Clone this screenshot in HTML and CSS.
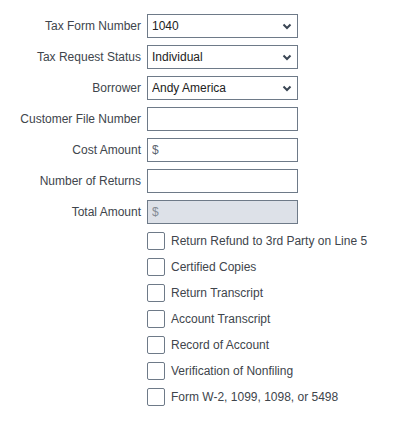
FILE: index.html
```html
<!DOCTYPE html>
<html lang="en">
<head>
  <meta charset="UTF-8" />
  <title>Tax Request</title>
  <link rel="stylesheet" href="styles.css">
</head>
<body>
  <form class="tax-form">
    <div class="fields">
      <label class="lbl" for="formNumber">Tax Form Number</label>
      <div class="select-wrap">
        <select id="formNumber"><option>1040</option></select>
        <svg class="chev" width="10" height="7" viewBox="0 0 10 7"><path d="M1.5 1.5 L5 5 L8.5 1.5" fill="none" stroke="#3a4654" stroke-width="2"/></svg>
      </div>

      <label class="lbl" for="status">Tax Request Status</label>
      <div class="select-wrap">
        <select id="status"><option>Individual</option></select>
        <svg class="chev" width="10" height="7" viewBox="0 0 10 7"><path d="M1.5 1.5 L5 5 L8.5 1.5" fill="none" stroke="#3a4654" stroke-width="2"/></svg>
      </div>

      <label class="lbl" for="borrower">Borrower</label>
      <div class="select-wrap">
        <select id="borrower"><option>Andy America</option></select>
        <svg class="chev" width="10" height="7" viewBox="0 0 10 7"><path d="M1.5 1.5 L5 5 L8.5 1.5" fill="none" stroke="#3a4654" stroke-width="2"/></svg>
      </div>

      <label class="lbl" for="fileNo">Customer File Number</label>
      <input class="txt" id="fileNo" type="text">

      <label class="lbl" for="cost">Cost Amount</label>
      <input class="txt" id="cost" type="text" placeholder="$">

      <label class="lbl" for="returns">Number of Returns</label>
      <input class="txt" id="returns" type="text">

      <label class="lbl" for="total">Total Amount</label>
      <input class="txt" id="total" type="text" placeholder="$" disabled>
    </div>

    <div class="checks">
      <label class="chk"><input type="checkbox"><span class="box"></span>Return Refund to 3rd Party on Line 5</label>
      <label class="chk"><input type="checkbox"><span class="box"></span>Certified Copies</label>
      <label class="chk"><input type="checkbox"><span class="box"></span>Return Transcript</label>
      <label class="chk"><input type="checkbox"><span class="box"></span>Account Transcript</label>
      <label class="chk"><input type="checkbox"><span class="box"></span>Record of Account</label>
      <label class="chk"><input type="checkbox"><span class="box"></span>Verification of Nonfiling</label>
      <label class="chk"><input type="checkbox"><span class="box"></span>Form W-2, 1099, 1098, or 5498</label>
    </div>
  </form>
</body>
</html>
```

FILE: styles.css
```css
body { margin: 0; font-family: "Liberation Sans", Arial, sans-serif; font-size: 12px; color: #40454c; background: #fff; }
.tax-form { padding-top: 14px; }
.fields { display: grid; grid-template-columns: 141px 151px; column-gap: 6px; row-gap: 7px; }
.lbl { text-align: right; line-height: 24px; height: 24px; white-space: nowrap; }
.select-wrap { position: relative; height: 24px; }
select, .txt { box-sizing: border-box; width: 151px; height: 24px; margin: 0; border: 1px solid #6e7a88; border-radius: 0; background: #fff; font: inherit; color: #222; padding: 0 4px; outline: none; }
select { appearance: none; -webkit-appearance: none; }
.chev { position: absolute; right: 6px; top: 9px; pointer-events: none; }
.txt::placeholder { color: #5e6670; opacity: 1; }
.txt:disabled { background: #dde1e8; }
.txt:disabled::placeholder { color: #858c95; }
.checks { display: flex; flex-direction: column; gap: 8px; margin: 8px 0 0 147px; }
.chk { display: flex; align-items: center; height: 18px; gap: 6px; }
.chk input { display: none; }
.box { box-sizing: border-box; width: 18px; height: 18px; border: 1px solid #6e7a88; border-radius: 2px; background: #fff; }
```
